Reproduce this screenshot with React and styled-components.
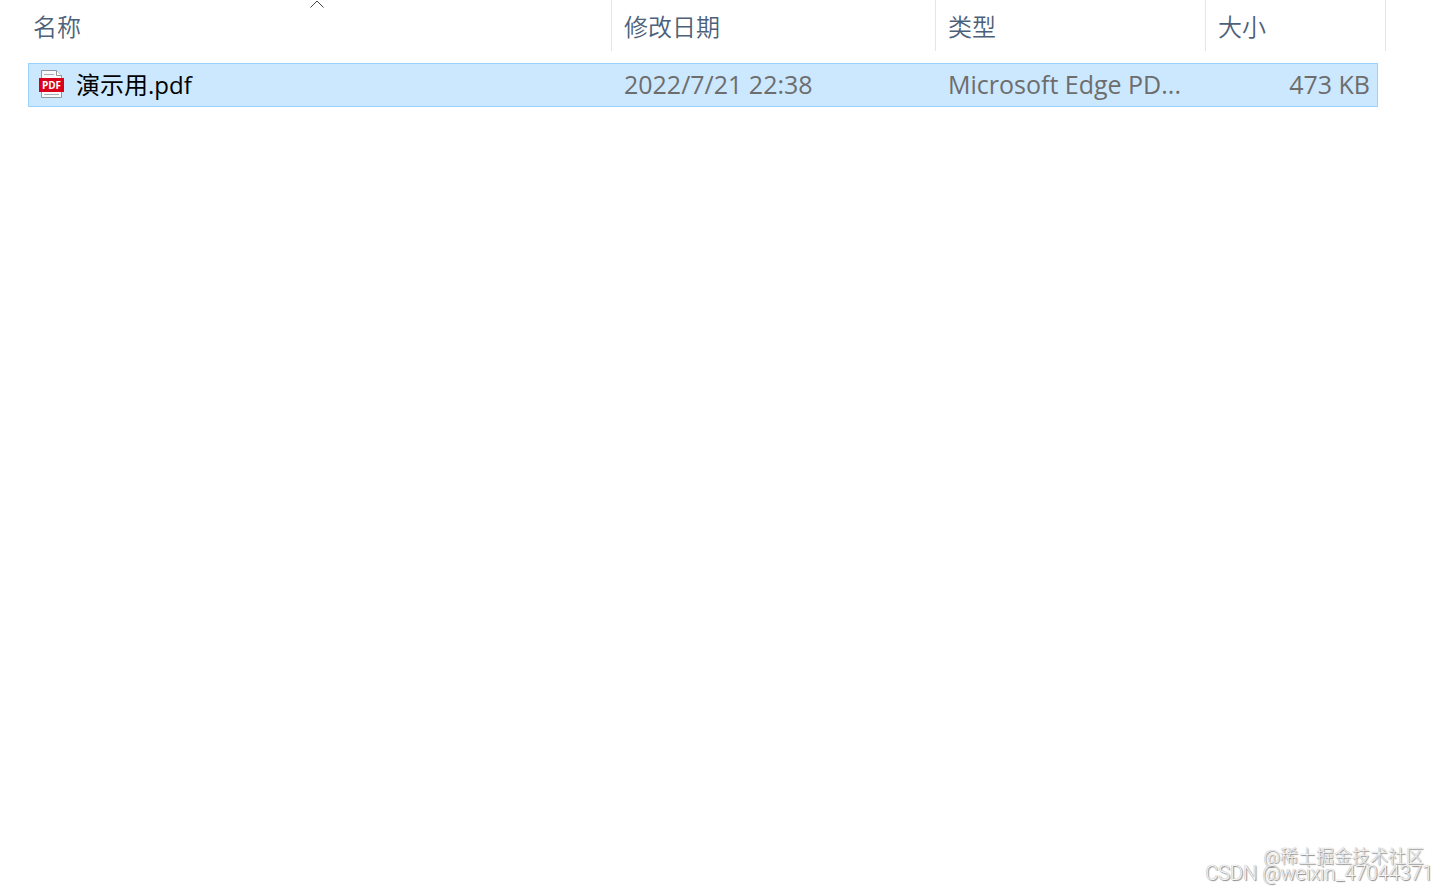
import React, { useState } from 'react';
import styled, { createGlobalStyle } from 'styled-components';

const GlobalStyle = createGlobalStyle`
	body {
		margin: 0;
		background: #fff;
		font-family: 'Open Sans', 'Noto Sans CJK SC', sans-serif;
	}
`;

const Page = styled.main`
	display: flex;
	flex-direction: column;
	justify-content: space-between;
	min-height: 100vh;
	box-sizing: border-box;
	padding-bottom: 11px;
`;

const ListArea = styled.div`
	padding: 0 63px 0 28px;
`;

const FileTable = styled.table`
	width: 100%;
	table-layout: fixed;
	border-collapse: separate;
	border-spacing: 0;
`;

const Column = styled.col`
	width: ${({ $width }) => ($width ? `${$width}px` : 'auto')};
`;

const HeaderCell = styled.th`
	padding: 0 0 12px;
	font-weight: 400;
`;

const HeaderButton = styled.button`
	display: grid;
	grid-template-rows: 9px 34px;
	width: 100%;
	height: 51px;
	padding: 0 0 0 ${({ $first }) => ($first ? '5px' : '12px')};
	border: 0;
	border-right: 1px solid #e5e5e5;
	background: transparent;
	color: #4c607a;
	font: 24px/34px 'Noto Sans CJK SC', sans-serif;
	font-weight: 350;
	text-align: left;
`;

const SortSlot = styled.span`
	display: flex;
	justify-content: center;
	padding-right: 10px;
`;

const Row = styled.tr`
	cursor: default;
`;

const Cell = styled.td`
	height: 42px;
	padding: 0 ${({ $end }) => ($end ? '0' : '12px')} 0 12px;
	border: solid #99d1ff;
	border-width: 1px 0;
	background: ${({ $selected }) => ($selected ? '#cce8ff' : '#fff')};
	color: #6d6d6d;
	font-size: 25px;
	line-height: 40px;
	text-align: ${({ $end }) => ($end ? 'right' : 'left')};
	vertical-align: top;
	white-space: nowrap;
	overflow: hidden;

	&:first-child {
		border-left-width: 1px;
		padding-left: 9px;
	}

	&:last-child {
		border-right-width: 1px;
		padding: 0;
	}
`;

const FileName = styled.span`
	display: flex;
	align-items: center;
	gap: 11px;
	color: #000;
	font-size: 24px;
	line-height: 42px;
`;

const Watermark = styled.footer`
	display: flex;
	flex-direction: column;
	align-items: flex-end;
	padding-right: 16px;
	color: #f4f4f4;
	font-weight: 300;
	text-shadow: 1px 1px 1px #888, 0 0 1px #999;
`;

const Community = styled.span`
	padding-right: 9px;
	font-family: Roboto, 'Noto Sans CJK SC', sans-serif;
	font-size: 18px;
	line-height: 16px;
`;

const Author = styled.span`
	font-family: Roboto, sans-serif;
	font-size: 20px;
	line-height: 16px;
`;

function PdfIcon() {
	return (
		<svg width="27" height="30" viewBox="0 0 27 30" aria-hidden="true">
			<path d="M3.5 .5h15l5 5v22h-20z" fill="#f7f9fa" stroke="#8c979f" />
			<path d="M18.5 .5v5h5" fill="#fff" stroke="#8c979f" />
			<path d="M6 4.5h10M6 24.5h15" stroke="#a8afb4" />
			<rect x="1" y="8" width="25" height="14" fill="#db0019" />
			<text
				x="13.5"
				y="18.5"
				textAnchor="middle"
				fill="#fff"
				fontFamily="Open Sans, sans-serif"
				fontSize="10"
				fontWeight="700"
			>
				PDF
			</text>
		</svg>
	);
}

function SortArrow({ ascending }) {
	return (
		<svg width="14" height="9" viewBox="0 0 14 9" aria-hidden="true">
			<path
				d={ascending ? 'M.5 7.5 7 1l6.5 6.5' : 'M.5 1 7 7.5 13.5 1'}
				fill="none"
				stroke="#444"
			/>
		</svg>
	);
}

const columns = [
	{ key: 'name', label: '名称' },
	{ key: 'date', label: '修改日期', width: 324 },
	{ key: 'type', label: '类型', width: 270 },
	{ key: 'size', label: '大小', width: 164 },
];

const files = [
	{ name: '演示用.pdf', date: '2022/7/21 22:38', type: 'Microsoft Edge PD...', size: '473 KB' },
];

export default function App() {
	const [sort, setSort] = useState({ key: 'name', ascending: true });
	const [selected, setSelected] = useState(files[0].name);

	const sortBy = (key) =>
		setSort((prev) => ({ key, ascending: prev.key === key ? !prev.ascending : true }));

	const rows = [...files].sort(
		(a, b) => a[sort.key].localeCompare(b[sort.key]) * (sort.ascending ? 1 : -1),
	);

	return (
		<>
			<GlobalStyle />
			<Page>
				<ListArea>
					<FileTable>
						<colgroup>
							{columns.map(({ key, width }) => (
								<Column key={key} $width={width} />
							))}
							{/* the selection stops short of the last header divider */}
							<Column $width={8} />
							<Column $width={8} />
						</colgroup>
						<thead>
							<tr>
								{columns.map(({ key, label }, i) => (
									<HeaderCell key={key} scope="col" colSpan={key === 'size' ? 3 : 1}>
										<HeaderButton type="button" $first={i === 0} onClick={() => sortBy(key)}>
											<SortSlot>
												{sort.key === key && <SortArrow ascending={sort.ascending} />}
											</SortSlot>
											{label}
										</HeaderButton>
									</HeaderCell>
								))}
							</tr>
						</thead>
						<tbody>
							{rows.map((file) => {
								const active = selected === file.name;
								return (
									<Row key={file.name} onClick={() => setSelected(file.name)}>
										<Cell $selected={active}>
											<FileName>
												<PdfIcon />
												{file.name}
											</FileName>
										</Cell>
										<Cell $selected={active}>{file.date}</Cell>
										<Cell $selected={active}>{file.type}</Cell>
										<Cell $selected={active} $end>
											{file.size}
										</Cell>
										<Cell $selected={active} />
									</Row>
								);
							})}
						</tbody>
					</FileTable>
				</ListArea>
				<Watermark>
					<Community>@稀土掘金技术社区</Community>
					<Author>CSDN @weixin_47044371</Author>
				</Watermark>
			</Page>
		</>
	);
}
